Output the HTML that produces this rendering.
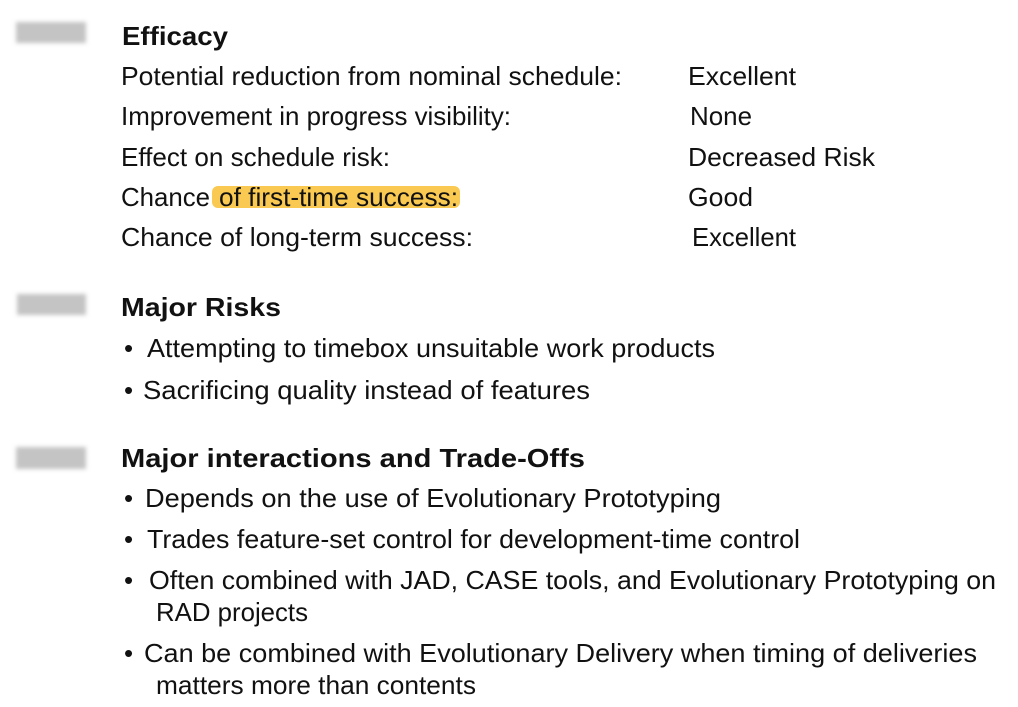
<!DOCTYPE html>
<html><head><meta charset="utf-8"><style>
html,body{margin:0;padding:0;background:#fff;width:1018px;height:707px;overflow:hidden}
svg{display:block}
text{font-family:"Liberation Sans",Arial,sans-serif;font-size:26px;fill:#111}
.b{font-weight:bold}
</style></head><body>
<svg width="1018" height="707" xmlns="http://www.w3.org/2000/svg">
<defs><filter id="bl"><feGaussianBlur stdDeviation="2"/></filter></defs>
<g filter="url(#bl)" fill="#c4c4c4">
<rect x="16" y="22" width="70" height="21"/>
<rect x="17" y="294" width="69" height="21"/>
<rect x="16" y="447" width="70" height="22"/>
</g>
<rect x="212" y="186" width="248" height="22" rx="6" fill="#f9c952"/>
<text class="b" x="122" y="45" textLength="106" lengthAdjust="spacingAndGlyphs">Efficacy</text>
<text x="121" y="85" textLength="501" lengthAdjust="spacingAndGlyphs">Potential reduction from nominal schedule:</text>
<text x="688" y="85" textLength="108" lengthAdjust="spacingAndGlyphs">Excellent</text>
<text x="121" y="125" textLength="390" lengthAdjust="spacingAndGlyphs">Improvement in progress visibility:</text>
<text x="690" y="125" textLength="62" lengthAdjust="spacingAndGlyphs">None</text>
<text x="121" y="166" textLength="269" lengthAdjust="spacingAndGlyphs">Effect on schedule risk:</text>
<text x="688" y="166" textLength="187" lengthAdjust="spacingAndGlyphs">Decreased  Risk</text>
<text x="121" y="206" textLength="89" lengthAdjust="spacingAndGlyphs">Chance</text>
<text x="219" y="206" textLength="239" lengthAdjust="spacingAndGlyphs">of first-time success:</text>
<text x="688" y="206" textLength="65" lengthAdjust="spacingAndGlyphs">Good</text>
<text x="121" y="246" textLength="352" lengthAdjust="spacingAndGlyphs">Chance of long-term success:</text>
<text x="692" y="246" textLength="104" lengthAdjust="spacingAndGlyphs">Excellent</text>
<text class="b" x="121" y="316" textLength="160" lengthAdjust="spacingAndGlyphs">Major  Risks</text>
<text x="124" y="357">•</text>
<text x="147" y="357" textLength="568" lengthAdjust="spacingAndGlyphs">Attempting to timebox unsuitable work products</text>
<text x="124" y="399">•</text>
<text x="143" y="399" textLength="447" lengthAdjust="spacingAndGlyphs">Sacrificing quality instead of features</text>
<text class="b" x="121" y="467" textLength="464" lengthAdjust="spacingAndGlyphs">Major  interactions  and Trade-Offs</text>
<text x="124" y="507">•</text>
<text x="145" y="507" textLength="576" lengthAdjust="spacingAndGlyphs">Depends on the use of Evolutionary Prototyping</text>
<text x="124" y="548">•</text>
<text x="147" y="548" textLength="653" lengthAdjust="spacingAndGlyphs">Trades feature-set control for development-time control</text>
<text x="124" y="589">•</text>
<text x="149" y="589" textLength="847" lengthAdjust="spacingAndGlyphs">Often combined with JAD, CASE tools, and Evolutionary Prototyping on</text>
<text x="156" y="621" textLength="152" lengthAdjust="spacingAndGlyphs">RAD projects</text>
<text x="124" y="662">•</text>
<text x="144" y="662" textLength="833" lengthAdjust="spacingAndGlyphs">Can be combined with Evolutionary Delivery when timing of deliveries</text>
<text x="156" y="694" textLength="320" lengthAdjust="spacingAndGlyphs">matters more than contents</text>
</svg>
</body></html>
